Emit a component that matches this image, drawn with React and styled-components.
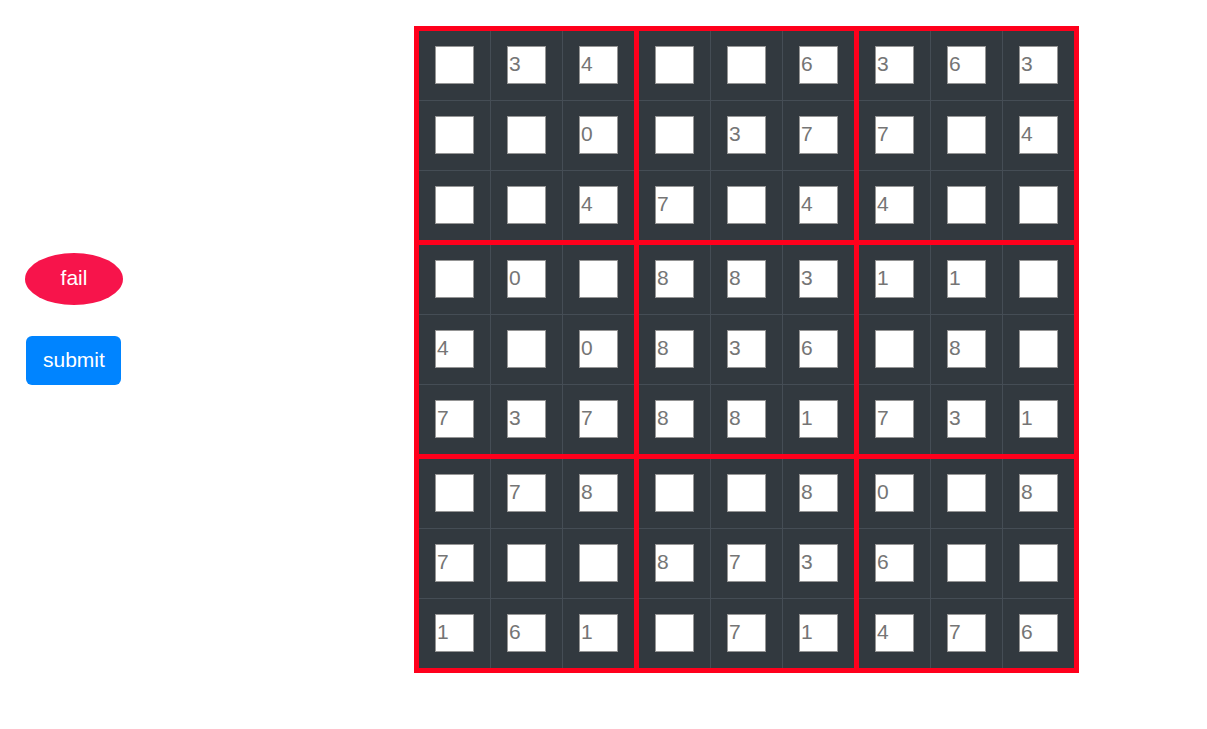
import React from 'react';
import styled, { createGlobalStyle } from 'styled-components';

const GlobalStyle = createGlobalStyle`
  *, *::before, *::after { box-sizing: border-box; }
  body {
    margin: 0;
    background: #fff;
    font-family: "Liberation Sans", Arial, Helvetica, sans-serif;
    font-size: 21px;
  }
`;

const Page = styled.main`
  display: grid;
  grid-template-columns: minmax(160px, 34.3%) 1fr;
  align-items: start;
  padding: 26px 0;
`;

const Actions = styled.div`
  display: flex;
  flex-direction: column;
  align-items: flex-start;
  gap: 31px;
  padding: 227px 25px 0;
`;

const Button = styled.button`
  border: 0;
  color: #fff;
  font: inherit;
  line-height: 25px;
  cursor: pointer;
`;

const FailButton = styled(Button)`
  min-width: 98px;
  padding: 12px 16px 15px;
  border-radius: 50%;
  background: #f7144b;
`;

const SubmitButton = styled(Button)`
  margin-left: 1px;
  padding: 11px 16px 13px 17px;
  border-radius: 6px;
  background: #0084ff;
`;

const Board = styled.table`
  width: max-content;
  border: 5px solid #ff001c;
  border-collapse: collapse;
  background: #32393f;
`;

const edge = (last, index) => {
  if (last || index % 3 === 2) return '5px solid #ff001c';
  return '1px solid #454d55';
};

const Cell = styled.td`
  padding: 15px 16px 16px;
  border-right: ${({ $col }) => edge($col === 8, $col)};
  border-bottom: ${({ $row }) => edge($row === 8, $row)};
`;

const Digit = styled.input`
  display: block;
  width: 39px;
  height: 38px;
  padding: 0 1px 2px;
  border: 1px solid #959595;
  border-radius: 0;
  background: #fff;
  color: #212529;
  font: inherit;

  &::placeholder {
    color: #757575;
    opacity: 1;
  }
`;

const rows = [
  ' 34  6363',
  '  0 377 4',
  '  47 44  ',
  ' 0 88311 ',
  '4 0836 8 ',
  '737881731',
  ' 78  80 8',
  '7  8736  ',
  '161 71476',
];

export default function App() {
  return (
    <>
      <GlobalStyle />
      <Page>
        <Actions>
          <FailButton type="button">fail</FailButton>
          <SubmitButton type="submit" form="sudoku">submit</SubmitButton>
        </Actions>
        <form id="sudoku" onSubmit={(event) => event.preventDefault()}>
          <Board>
            <tbody>
              {rows.map((row, r) => (
                <tr key={r}>
                  {[...row].map((digit, c) => (
                    <Cell key={c} $row={r} $col={c}>
                      <Digit
                        type="text"
                        inputMode="numeric"
                        maxLength={1}
                        placeholder={digit.trim()}
                        aria-label={`Row ${r + 1}, column ${c + 1}`}
                      />
                    </Cell>
                  ))}
                </tr>
              ))}
            </tbody>
          </Board>
        </form>
      </Page>
    </>
  );
}
